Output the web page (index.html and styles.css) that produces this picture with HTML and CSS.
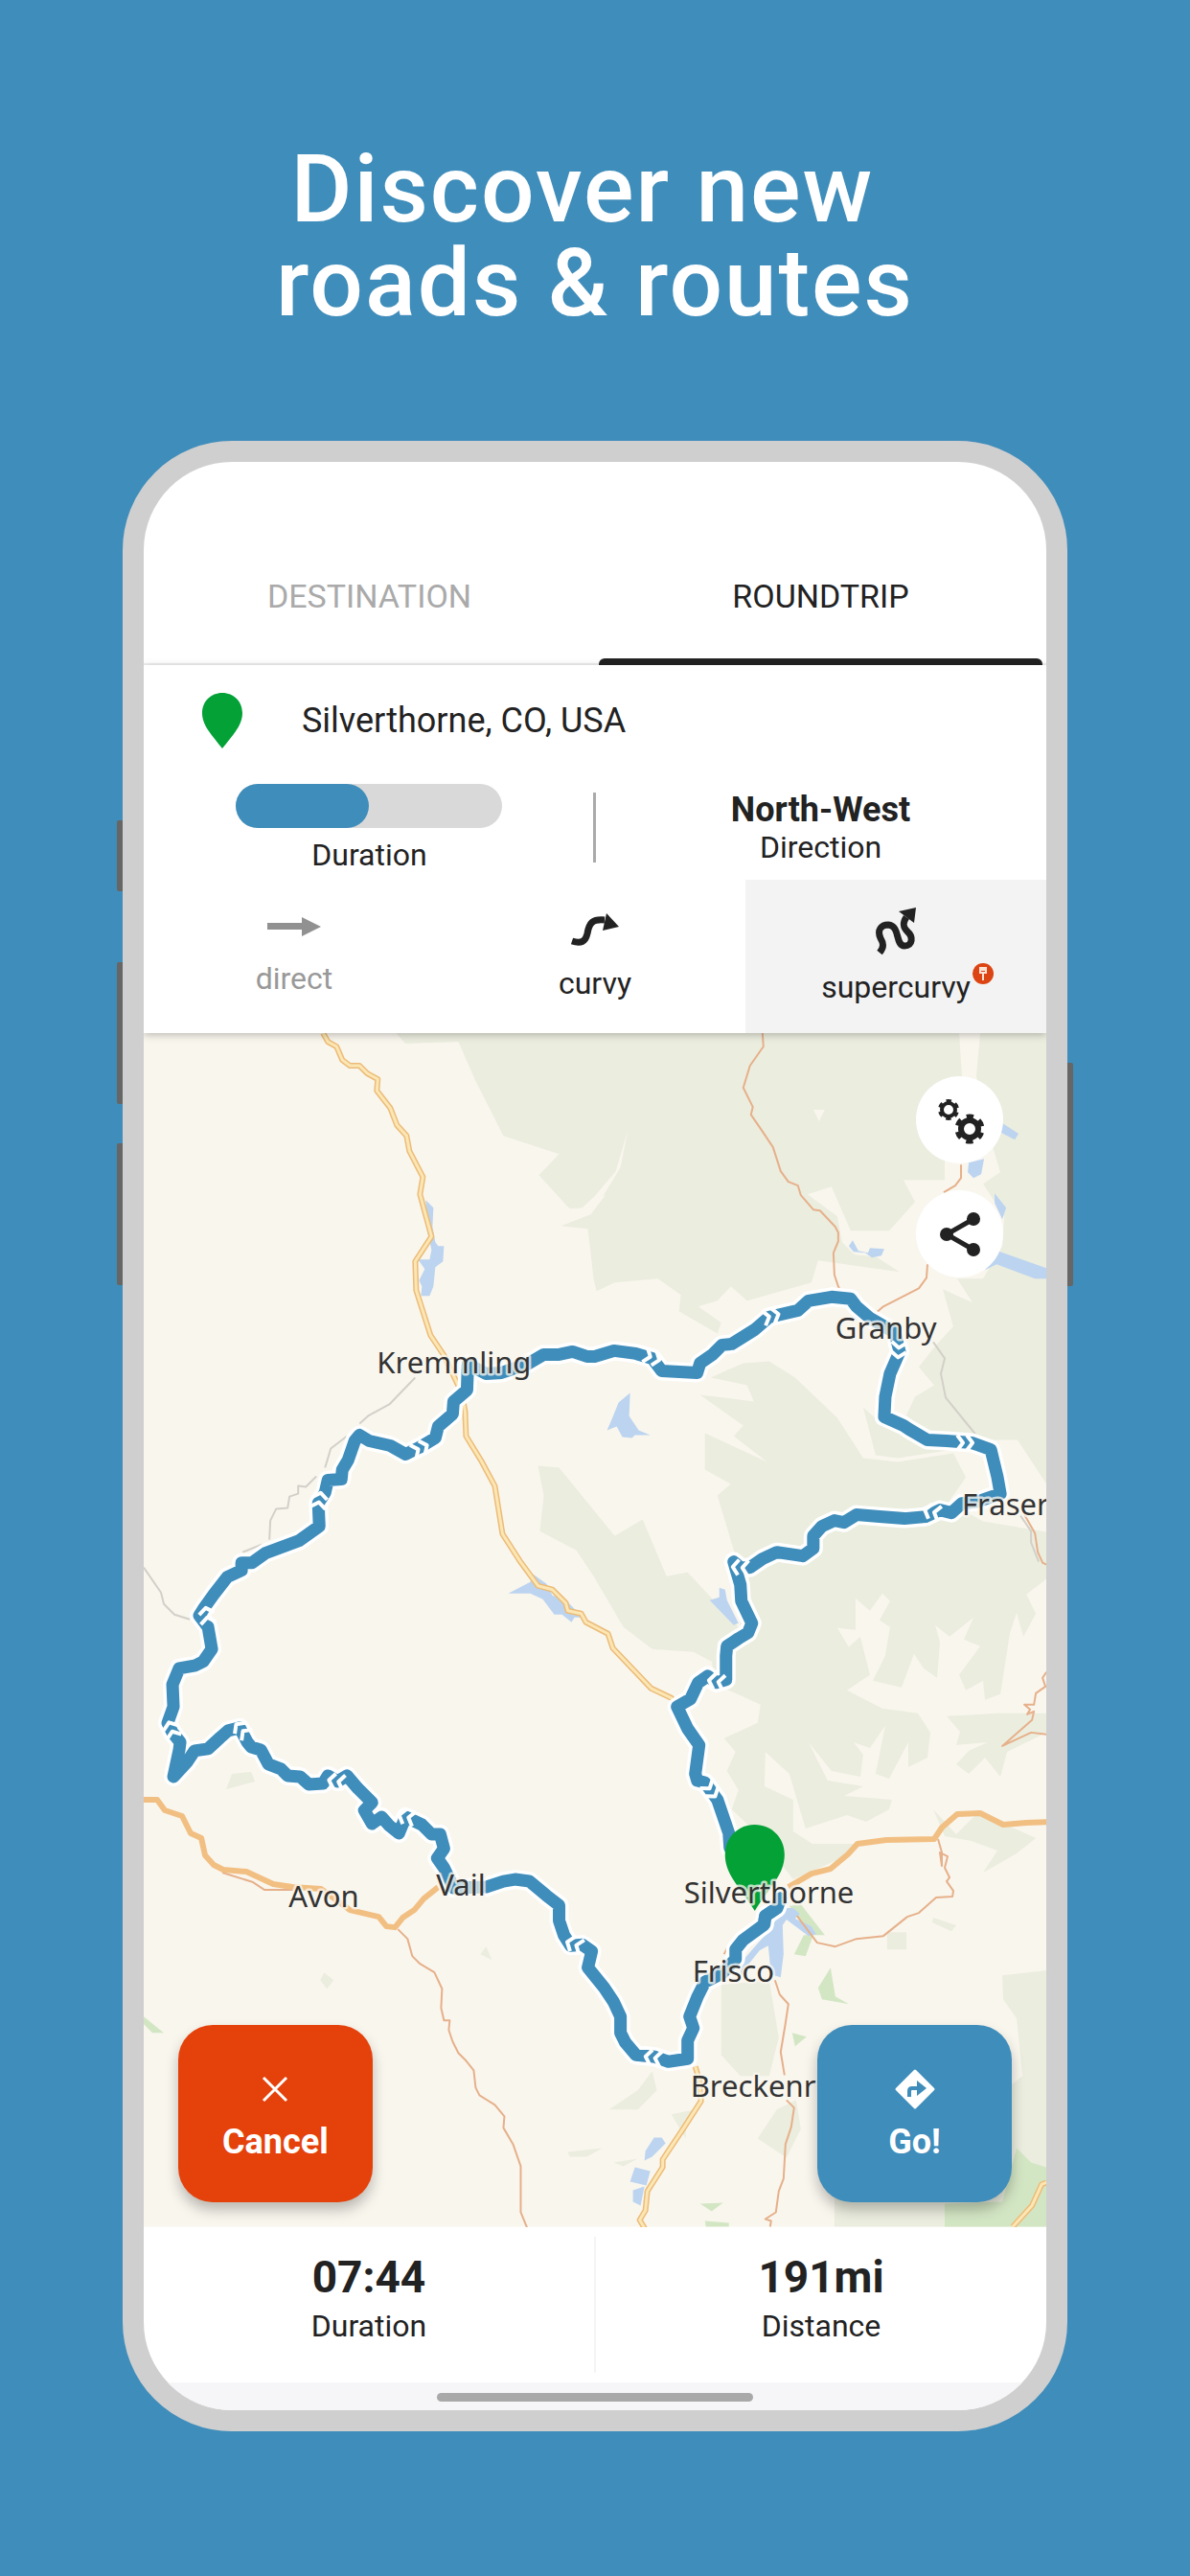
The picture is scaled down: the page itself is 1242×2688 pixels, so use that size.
FILE: index.html
```html
<!DOCTYPE html>
<html lang="en">
<head>
    <meta charset="UTF-8">
    <meta name="viewport" content="width=device-width, initial-scale=1.0">
    <title>Discover new roads &amp; routes</title>
    <link rel="stylesheet" href="styles.css">
</head>
<body>
    <h1>Discover new&nbsp;<br>roads &amp; routes</h1>

    <div class="phone">
        <span class="side-btn mute"></span>
        <span class="side-btn vol-up"></span>
        <span class="side-btn vol-down"></span>
        <span class="side-btn power"></span>

        <main class="screen">
            <nav class="tabs">
                <button class="tab">DESTINATION</button>
                <button class="tab active">ROUNDTRIP</button>
            </nav>

            <section class="panel">
                <div class="location">
                    <svg class="pin" viewBox="0 0 42 58"><path d="M21 0C9 0 0 9 0 21c0 13 10 23 21 37 11-14 21-24 21-37C42 9 33 0 21 0z" fill="#04a137"/></svg>
                    <span>Silverthorne, CO, USA</span>
                </div>

                <div class="params">
                    <div class="param">
                        <progress id="duration" value="50" max="100"></progress>
                        <label for="duration">Duration</label>
                    </div>
                    <div class="param direction">
                        <strong>North-West</strong>
                        <span>Direction</span>
                    </div>
                </div>

                <div class="modes">
                    <button class="mode direct">
                        <svg width="56" height="28" viewBox="0 0 56 28"><path d="M0 6h36V0l20 10-20 10v-7H0z" fill="#919191"/></svg>
                        <span>direct</span>
                    </button>
                    <button class="mode">
                        <svg width="50" height="38" viewBox="0 0 50 38"><path d="M1 30c9 3 14 1 16-8 2-11 5-15 18-14" fill="none" stroke="#222" stroke-width="7"/><path d="M37 1l13 14-17 4z" fill="#222"/></svg>
                        <span>curvy</span>
                    </button>
                    <button class="mode selected">
                        <svg width="42" height="46" viewBox="0 0 42 46"><path d="M4 46c5-6 4-10 1-15-4-9 1-14 8-14 13 1 7 22 17 22 9 0 9-10 3-15-5-5-5-9-1-15" fill="none" stroke="#222" stroke-width="7"/><path d="M24 3l18-4-2 16z" fill="#222"/></svg>
                        <span class="mode-name">supercurvy
                            <svg class="badge" viewBox="0 0 22 22"><circle cx="11" cy="11" r="11" fill="#dc4413"/><path d="M7 5h8M8 7v3h6V7zM11 10v8" fill="none" stroke="#fde3d6" stroke-width="2"/></svg>
                        </span>
                    </button>
                </div>
            </section>

            <section class="map">
                <svg class="map-canvas" viewBox="150 1078 941 1244" preserveAspectRatio="xMidYMid slice">
                    <defs>
                        <path id="route" d="M761 1927L760 1912 748 1877 735 1859 727 1857 725 1850 729 1820 717 1803 706 1780 720 1772 728 1755 738 1748 747 1755 757 1752 757 1727 758 1717 770 1709 780 1703 784 1693 773 1670 772 1653 765 1629 772 1635 782 1635 795 1626 810 1619 837 1623 848 1615 848 1602 857 1592 870 1586 880 1588 893 1580 917 1582 943 1584 965 1582 980 1575 992 1578 1003 1568 1020 1566 1043 1558 1040 1541 1033 1512 1013 1505 987 1503 967 1502 948 1491 942 1487 922 1478 923 1457 928 1433 938 1410 933 1390 907 1375 893 1363 887 1355 867 1353 843 1357 832 1367 802 1374 787 1387 763 1402 753 1403 743 1413 730 1422 727 1432 690 1430 680 1417 663 1412 640 1409 620 1415 612 1415 597 1410 583 1413 567 1413 550 1423 523 1432 507 1433 488 1423 487 1450 473 1462 472 1475 457 1488 454 1500 437 1510 423 1517 407 1508 385 1503 375 1497 370 1503 363 1523 357 1533 356 1543 342 1544 339 1557 332 1568 333 1592 312 1607 277 1620 263 1630 252 1630 252 1638 237 1645 223 1663 213 1677 208 1685 217 1697 221 1720 212 1733 204 1737 187 1740 180 1757 181 1780 175 1797 180 1807 188 1817 187 1825 181 1853 195 1838 203 1826 217 1824 230 1812 238 1805 250 1802 258 1817 262 1822 272 1825 280 1840 293 1845 300 1852 313 1853 322 1861 337 1860 342 1852 352 1858 362 1852 373 1865 388 1880 380 1888 388 1902 398 1895 406 1904 416 1912 423 1895 440 1903 450 1913 459 1913 463 1928 456 1938 463 1948 473 1969 507 1968 525 1962 537 1960 552 1962 570 1977 583 1987 583 2003 588 2018 595 2029 607 2028 617 2035 613 2052 630 2073 640 2088 647 2103 647 2120 652 2130 663 2143 683 2145 697 2150 717 2147 717 2128 723 2115 719 2103 727 2083 735 2067 753 2058 767 2043 767 2033 775 2023 797 2007 798 1998 810 1990 813 1980"/>
                        <path id="chevron" d="M-8-8L-2 0-8 8M2-8L8 0 2 8" fill="none" stroke="#fff" stroke-width="4"/>
                    </defs>

                    <rect x="150" y="1078" width="941" height="1244" fill="#f9f6ee"/>

                    <!-- forests -->
                    <g fill="#ebeddf">
                        <path d="M413 1078L423 1089 478 1087 496 1128 525 1185 583 1204 562 1226 594 1261 610 1260 632 1246 616 1267 585 1279 613 1282 619 1334 622 1347 641 1338 686 1334 710 1351 708 1368 748 1391 752 1380 728 1363 748 1357 762 1342 779 1357 846 1338 853 1315 938 1327 913 1311 891 1309 878 1296 873 1269 842 1246 867 1238 887 1284 927 1284 954 1254 942 1231 985 1231 985 1212 1003 1180 1003 1124 1000 1078z"/>
                        <path d="M1022 1078L1018 1123 1030 1180 1043 1223 1025 1235 1047 1269 1045 1300 1025 1334 998 1334 1014 1359 983 1345 994 1384 976 1403 958 1426 974 1445 954 1457 940 1487 965 1500 1016 1502 1061 1502 1091 1548V1078z"/>
                        <path d="M741 1437L779 1445 786 1462 730 1455 775 1487 765 1498 800 1525 735 1495 735 1533 762 1548 748 1560 770 1633 772 1697 742 1733 747 1757 793 1778 790 1797 755 1813 767 1827 758 1847 770 1867 763 1887 790 1913 827 1960 880 1937 893 1923 847 1923 827 1910 827 1877 797 1863 798 1827 823 1850 840 1907 883 1893 903 1900 927 1887 930 1877 880 1873 900 1863 863 1857 843 1817 867 1847 897 1853 900 1830 890 1817 907 1823 923 1800 913 1850 927 1855 947 1817 947 1843 967 1833 970 1807 957 1787 920 1782 883 1763 907 1747 897 1707 885 1718 873 1698 892 1700 892 1667 907 1680 920 1662 928 1670 917 1690 928 1697 923 1727 910 1753 940 1760 953 1725 963 1740 977 1750 980 1713 975 1695 990 1707 1015 1687 1005 1710 1022 1717 1000 1747 1007 1763 1025 1753 1027 1773 1043 1767 1053 1703 1060 1682 1067 1707 1080 1683 1070 1663 1091 1647 1091 1598 1025 1587 989 1567 1007 1541 994 1516 936 1525 900 1521 873 1479 829 1437 802 1420 775 1422z"/>
                        <path d="M900 1468L922 1488 960 1506 994 1512 936 1521 913 1518z"/>
                        <path d="M561 1529L583 1531 641 1602 670 1585 695 1644 717 1640 770 1697 742 1733 723 1723 680 1720 650 1697 619 1644 601 1617 563 1597 567 1560z"/>
                        <path d="M987 1790L1040 1787 1091 1787V1807L1050 1827 1043 1853 1027 1833 1010 1850 997 1840 1010 1826 1030 1817 997 1820 1001 1806zM973 1887L997 1913 1020 1890 1080 1917 1060 1933 1025 1953 1040 1930 1013 1920 985 1915z"/>
                        <path d="M242 1850l20-2 4 10-30 8 3-8zM338 2057l10 8-7 9-7-9zM507 2030l6 14-12-6zM592 2244l36-4-16 9-18 0z"/>
                        <path d="M752 2070l50-5 10 60-10 40-30 0-20-22zM680 2160l5 20-20 20-30 0 30-20zM810 2200l20-10 5 30-15 30-30-20zM700 2205l25-5-10 20 0 10zM925 2015l20 0 0 18-20 0zM973 2000l24 8-5 6-20-9zM1045 2060l46-5v240l-50 0 0-110 25-20-6-60-14-20zM870 2290h220v32H870zM640 2255l25-4-15 8z"/>
                    </g>

                    <!-- clearings -->
                    <path d="M848 1158l12 0-6 12zM655 1178l-8 40-22 36-35 22 30-28 22-26z" fill="#f9f6ee"/>

                    <!-- parks -->
                    <g fill="#d3e6c4">
                        <path d="M1060 2240l15 15 16 5v62H985v-24l60-2zM835 1986l25 32-15 0-22-30zM838 2018l10 0-8 22-12-2zM866 2052l5 30 14 8-28-5-4-12zM730 2298l24-1-12 9zM735 2316l25 2v4h-24zM150 2103l21 17h-12l-9-9zM826 2120l15 4-12 10z"/>
                    </g>

                    <!-- water -->
                    <g fill="#bcd4f0">
                        <path d="M444 1252l8 8-1 20 3 16 3 4 6 0-1 16-8 6-2 20-4 10-9 0 1-10-3-6 6-12-7-10 12 0 2-10-5-22zM657 1453l-1 24 10 15 12 5-16 0-3 3-10-1-6-11-10 4 6-14 6-15zM530 1662l23-12 3-8 14 10 6 12 14 5 18 18-9 0-3 5-10-8-8 0-12-16-13-6zM740 1669l10-3 0-10 6 2 2 11 12 24-5 2z"/>
                        <path d="M1045 1172l17 11-4 6-14-7zM1010 1213l16-4-3 16-8 4-6-6zM1037 1245l12 15-4 12-8-17zM1040 1305l51 18 0 11-12 0-40-15-12 6zM885 1300l4-6 6 11 10 2 2-5 15 1-3 7-10 2-7-5-12-1z"/>
                        <path d="M815 1990l12 0 7 6-5 5 17 8 5 8-8 2-23-17-4 6 1 30-3 24-10-3-3-30-9 5-12 15-2 14-6-4 2-14 22-25 12-16zM682 2229l8 0 4 6-14 14-8 4 1-10zM662 2260l16 4-4 15-17-4zM660 2284l12-4-4 20-8-4z"/>
                    </g>

                    <!-- tracks -->
                    <g class="track">
                        <path d="M433 1437l-27 28-22 12-9 8M362 1498l-17 13-6 20M330 1540l-11 11-8-1 0 8-9 3-2 12-12 1-6 12-1 20M273 1611l-20 8M150 1635l18 26 3 12 11 11 16 5M973 1400l12 17-4 16 5 25 31 38M1064 1581l11 16 0 12 8 20"/>
                    </g>

                    <!-- country roads -->
                    <g class="minor">
                        <path d="M795 1078l1 14-14 20-7 23 10 20-2 8 11 16 12 18 8 25 8 11 10 4 3 10 13 15 7 1 16 17 3 6 0 9-5 12 1 23 4 12 5 10M1002 1215l0 14-6 8-12 7M967 1319l-1 14-8 11-37 19-8 7M1068 1580l11 19 3 20 5 11 4 2"/>
                        <path d="M1091 1744l-4 6 3 9-10 7-2 12-10 0 6 5-3 5 7-3-2 9-31 27 30-14 16 2M978 1918l4 14 0 14-2-14 8 4-3 12 5 10-3 4 7 10-1 6-17 1-18 16-12 4-25 20-28 3-22 8-19-4-12-16-9-12M808 2065l5 15 9 10-3 20-5 30 4 24M820 2190l8 8-3 20-6 18-2 36-5 13-3 22-11 7 6 2-1 6"/>
                        <path d="M415 2012l10 10 5 18 8 8 15 9 8 17-1 20 3 13 6 0-1 10 4 12 6 12 8 8 8 10 2 18 4 8 16 10 10 12-1 12 10 17 8 23v48l7 17M232 1953l32 10 12 8h30M755 2038l4-8 2 8"/>
                    </g>

                    <!-- highways -->
                    <g class="highway-case">
                        <path d="M337 1078l5 9 9 5 6 14 8 6h10l8 8 11 6-1 12 14 18 7 18 10 11 3 16 14 27-3 18 12 44-17 26 1 30 15 47 14 21 18 38 4 20 1 26 16 26 14 26 8 50 18 28 19 26 15 4 14 14 2 8 14 3 5 9 23 12 5 15 40 42 21 10 10 14"/>
                        <path d="M725 2155l4 14 2 22-18 28-22 33 0 8-16 25-2 20-6 10 6 10M1056 2322l20-22 10-22 5-2"/>
                    </g>
                    <g class="highway">
                        <path d="M337 1078l5 9 9 5 6 14 8 6h10l8 8 11 6-1 12 14 18 7 18 10 11 3 16 14 27-3 18 12 44-17 26 1 30 15 47 14 21 18 38 4 20 1 26 16 26 14 26 8 50 18 28 19 26 15 4 14 14 2 8 14 3 5 9 23 12 5 15 40 42 21 10 10 14"/>
                        <path d="M725 2155l4 14 2 22-18 28-22 33 0 8-16 25-2 20-6 10 6 10M1056 2322l20-22 10-22 5-2"/>
                    </g>
                    <g class="freeway">
                        <path d="M150 1877l14 0 8 11 18 6 9 18 11 5 4 18 9 10 10 5 24 2 28 13 20 3 30 2 30 22 30 7 8 10 9 1 8-10 12-8 10-12 15-12M822 1968l24-14 20-5 18-15 10-11 30-4 50-1 8-12 16-14 24-1 24 12 24-2 26-1"/>
                    </g>

                    <!-- planned route -->
                    <use href="#route" class="route-case"/>
                    <use href="#route" class="route"/>
                    <use href="#chevron" transform="translate(804 1373) rotate(-15)"/>
                    <use href="#chevron" transform="translate(680 1416) rotate(20)"/>
                    <use href="#chevron" transform="translate(937 1408) rotate(95)"/>
                    <use href="#chevron" transform="translate(1006 1505)"/>
                    <use href="#chevron" transform="translate(972 1577) rotate(195)"/>
                    <use href="#chevron" transform="translate(772 1635) rotate(185)"/>
                    <use href="#chevron" transform="translate(747 1754) rotate(190)"/>
                    <use href="#chevron" transform="translate(741 1867) rotate(55)"/>
                    <use href="#chevron" transform="translate(438 1511) rotate(-25)"/>
                    <use href="#chevron" transform="translate(333 1565) rotate(-80)"/>
                    <use href="#chevron" transform="translate(216 1685) rotate(-100)"/>
                    <use href="#chevron" transform="translate(179 1804) rotate(-110)"/>
                    <use href="#chevron" transform="translate(252 1804) rotate(-135)"/>
                    <use href="#chevron" transform="translate(351 1858) rotate(190)"/>
                    <use href="#chevron" transform="translate(424 1895) rotate(195)"/>
                    <use href="#chevron" transform="translate(599 2028) rotate(200)"/>
                    <use href="#chevron" transform="translate(681 2146) rotate(190)"/>

                    <path d="M787 1903c-18 0-31 14-31 31 0 22 16 34 31 59 15-25 31-37 31-59 0-17-13-31-31-31z" fill="#04a137"/>
                    <path d="M797 2003L798 1998 810 1990 814 1980" class="route"/>

                    <g class="labels">
                        <text x="393" y="1433">Kremmling</text>
                        <text x="871" y="1397">Granby</text>
                        <text x="1003" y="1580">Fraser</text>
                        <text x="301" y="1989">Avon</text>
                        <text x="455" y="1977">Vail</text>
                        <text x="713" y="1985">Silverthorne</text>
                        <text x="722" y="2067">Frisco</text>
                        <text x="720" y="2187">Breckenridge</text>
                    </g>
                </svg>

                <div class="map-tools">
                    <button aria-label="Settings">
                        <svg width="48" height="48" viewBox="0 0 48 48">
                            <g fill="none" stroke="#222">
                                <circle cx="12" cy="13" r="7" stroke-width="4"/>
                                <circle cx="12" cy="13" r="9" stroke-width="4" stroke-dasharray="5 4.42" stroke-dashoffset="2.5" transform="rotate(30 12 13)"/>
                                <circle cx="34" cy="33" r="9" stroke-width="6"/>
                                <circle cx="34" cy="33" r="13" stroke-width="5" stroke-dasharray="7 6.61" stroke-dashoffset="3.5" transform="rotate(30 34 33)"/>
                            </g>
                        </svg>
                    </button>
                    <button aria-label="Share">
                        <svg width="48" height="48" viewBox="0 0 48 48">
                            <path d="M38 8L10 24l28 16" fill="none" stroke="#222" stroke-width="5"/>
                            <circle cx="38" cy="8" r="7" fill="#222"/><circle cx="10" cy="24" r="7" fill="#222"/><circle cx="38" cy="40" r="7" fill="#222"/>
                        </svg>
                    </button>
                </div>

                <div class="map-actions">
                    <button class="action cancel">
                        <svg width="42" height="42" viewBox="0 0 42 42"><path d="M9 9l24 24M33 9L9 33" stroke="#fff" stroke-width="3"/></svg>
                        Cancel
                    </button>
                    <button class="action go">
                        <svg width="42" height="42" viewBox="0 0 42 42"><path d="M21 2l19 19-19 19L2 21z" fill="#fff" stroke="#fff" stroke-width="3" stroke-linejoin="round"/><path d="M15 29v-6q0-3 3-3h6" fill="none" stroke="#3f8dbb" stroke-width="4"/><path d="M23 12l10 8-10 8z" fill="#3f8dbb"/></svg>
                        Go!
                    </button>
                </div>
            </section>

            <section class="stats">
                <div class="stat"><strong>07:44</strong><span>Duration</span></div>
                <div class="stat"><strong>191mi</strong><span>Distance</span></div>
            </section>

            <div class="home-bar"><span></span></div>
        </main>
    </div>
</body>
</html>
```
FILE: styles.css
```css
* {
    box-sizing: border-box;
}

body {
    margin: 0;
    padding: 149px 0 152px;
    min-height: 100vh;
    background: #3f8dbb;
    color: #222;
    font-family: Roboto, sans-serif;
    font-size: 32px;
    line-height: 38px;
}

h1 {
    margin: 0 0 115px;
    color: #fff;
    font-size: 98px;
    line-height: 98px;
    font-weight: 500;
    letter-spacing: 2px;
    text-align: center;
}

button {
    margin: 0;
    padding: 0;
    border: none;
    background: none;
    color: inherit;
    font: inherit;
    cursor: pointer;
}

svg {
    display: block;
    overflow: visible;
}

/* phone frame */
.phone {
    position: relative;
    width: 79.4%;
    margin: 0 auto;
    border: 22px solid #cfcfcf;
    border-radius: 114px;
    background: #cfcfcf;
}

.side-btn {
    position: absolute;
    left: -28px;
    width: 6px;
    height: 148px;
    border-radius: 2px 0 0 2px;
    background: #666;
}

.mute {
    top: 374px;
    height: 74px;
}

.vol-up {
    top: 522px;
}

.vol-down {
    top: 711px;
}

.power {
    top: 627px;
    left: auto;
    right: -28px;
    height: 233px;
    border-radius: 0 2px 2px 0;
}

.screen {
    overflow: hidden;
    border-radius: 92px;
    background: #fff;
}

/* tabs */
.tabs {
    display: flex;
    padding-top: 70px;
    border-bottom: 2px solid #f0f0f0;
}

.tab {
    position: relative;
    flex: 1;
    height: 140px;
    color: #aaa;
    font-size: 34px;
}

.tab.active {
    color: #222;
}

.tab.active::after {
    content: "";
    position: absolute;
    left: 4px;
    right: 4px;
    bottom: -2px;
    height: 7px;
    border-radius: 6px 6px 0 0;
    background: #222;
}

/* search panel */
.panel {
    position: relative;
    z-index: 1;
    box-shadow: 0 2px 8px rgba(0, 0, 0, 0.25);
    background: #fff;
}

.location {
    display: flex;
    align-items: center;
    gap: 62px;
    height: 116px;
    padding-left: 61px;
    font-size: 36px;
}

.pin {
    width: 42px;
    height: 58px;
}

.params {
    display: flex;
    height: 108px;
}

.param {
    position: relative;
    flex: 1;
    display: flex;
    flex-direction: column;
    align-items: center;
    justify-content: center;
    gap: 9px;
}

.param.direction {
    gap: 0;
}

.direction::before {
    content: "";
    position: absolute;
    left: -2px;
    top: 17px;
    width: 3px;
    height: 73px;
    background: #aaa;
}

.param strong {
    font-size: 36px;
    line-height: 40px;
}

progress {
    appearance: none;
    width: 278px;
    height: 46px;
    border: none;
}

progress::-webkit-progress-bar {
    border-radius: 23px;
    background: #d9d9d9;
}

progress::-webkit-progress-value {
    border-radius: 23px;
    background: #3f8dbb;
}

.modes {
    display: flex;
}

.mode {
    flex: 1;
    display: flex;
    flex-direction: column;
    align-items: center;
    justify-content: center;
    gap: 17px;
    height: 160px;
}

.mode.direct {
    color: #999;
}

.mode.selected {
    background: #f3f3f3;
}

.mode-name {
    position: relative;
}

.badge {
    position: absolute;
    top: -6px;
    right: -24px;
    width: 22px;
    height: 22px;
}

/* map */
.map {
    position: relative;
    overflow: hidden;
}

.map-canvas {
    width: 100%;
    overflow: hidden;
}

.map-canvas path,
.map-canvas use {
    stroke-linejoin: round;
}

.track,
.minor,
.highway,
.highway-case,
.freeway,
.route,
.route-case {
    fill: none;
}

.track {
    stroke: #d3d0c9;
    stroke-width: 2;
}

.minor {
    stroke: #e6b08a;
    stroke-width: 2;
}

.highway-case {
    stroke: #ecbc78;
    stroke-width: 6;
}

.highway {
    stroke: #fbe6b4;
    stroke-width: 3;
}

.freeway {
    stroke: #f2bf82;
    stroke-width: 6;
}

.route-case {
    stroke: #fff;
    stroke-width: 20;
    stroke-linecap: round;
}

.route {
    stroke: #3f8dbb;
    stroke-width: 13;
    stroke-linecap: round;
}

.labels {
    fill: #333;
    stroke: rgba(249, 246, 238, 0.75);
    stroke-width: 5;
    stroke-linejoin: round;
    paint-order: stroke;
    font-family: "Noto Sans", sans-serif;
    font-size: 31px;
}

.map-tools {
    position: absolute;
    top: 45px;
    right: 45px;
    display: flex;
    flex-direction: column;
    gap: 28px;
}

.map-tools button {
    display: flex;
    align-items: center;
    justify-content: center;
    width: 91px;
    height: 91px;
    border-radius: 50%;
    background: #fff;
}

.map-actions {
    position: absolute;
    left: 36px;
    right: 36px;
    bottom: 26px;
    display: flex;
    justify-content: space-between;
}

.action {
    display: flex;
    flex-direction: column;
    align-items: center;
    justify-content: center;
    gap: 12px;
    width: 203px;
    height: 185px;
    padding-top: 6px;
    border-radius: 36px;
    box-shadow: 0 8px 14px rgba(0, 0, 0, 0.25);
    color: #fff;
    font-size: 36px;
    line-height: 44px;
    font-weight: 700;
}

.cancel {
    background: #e5410b;
}

.go {
    background: #3f8dbb;
}

/* totals */
.stats {
    display: flex;
    padding: 10px 0;
}

.stat {
    flex: 1;
    display: flex;
    flex-direction: column;
    align-items: center;
    gap: 6px;
    height: 142px;
    padding-top: 16px;
}

.stat + .stat {
    border-left: 2px solid #f4f4f4;
}

.stat strong {
    font-size: 46px;
    line-height: 52px;
}

.home-bar {
    display: flex;
    justify-content: center;
    padding: 11px 0 9px;
    background: #f6f6f8;
}

.home-bar span {
    width: 35%;
    height: 9px;
    border-radius: 5px;
    background: #a9a9a9;
}
```
